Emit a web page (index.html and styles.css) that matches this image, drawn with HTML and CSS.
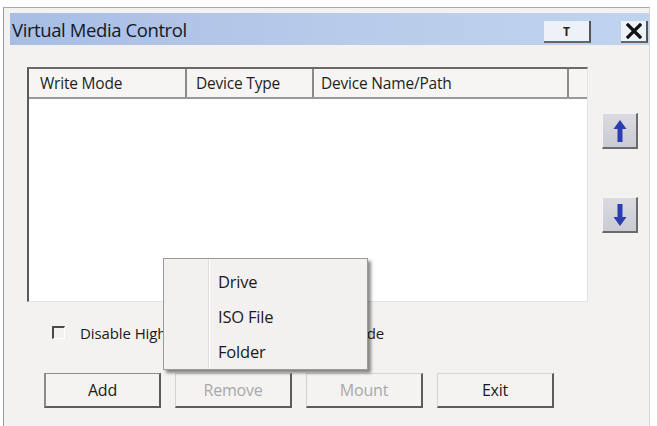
FILE: index.html
```html
<!DOCTYPE html>
<html>
<head>
<meta charset="utf-8">
<link rel="stylesheet" href="styles.css">
</head>
<body>
<div class="window">
  <div class="titlebar">
    <span class="title">Virtual Media Control</span>
    <div class="tbtns">
      <div class="tb tb-t">T</div>
      <div class="tb tb-x">
        <svg width="16" height="16" viewBox="0 0 16 16"><path d="M2 2 L14 14 M14 2 L2 14" stroke="#111" stroke-width="3.2" stroke-linecap="square"/></svg>
      </div>
    </div>
  </div>
  <div class="content">
    <div class="main-row">
      <div class="list">
        <div class="list-head">
          <div class="col c1">Write Mode</div>
          <div class="col c2">Device Type</div>
          <div class="col c3">Device Name/Path</div>
          <div class="col c4"></div>
        </div>
        <div class="list-body"></div>
      </div>
      <div class="side">
        <div class="arrow-btn up">
          <svg width="14" height="24" viewBox="0 0 14 24"><path d="M7 1 L13.5 10 L9.5 10 L9.5 23 L4.5 23 L4.5 10 L0.5 10 Z" fill="#2b3db0"/></svg>
        </div>
        <div class="arrow-btn down">
          <svg width="14" height="24" viewBox="0 0 14 24"><path d="M7 23 L13.5 14 L9.5 14 L9.5 1 L4.5 1 L4.5 14 L0.5 14 Z" fill="#2b3db0"/></svg>
        </div>
      </div>
    </div>
    <div class="check-row">
      <span class="checkbox"></span>
      <span class="check-label">Disable High Speed USB Virtual Media Mode</span>
    </div>
    <div class="btn-row">
      <div class="btn default">Add</div>
      <div class="btn disabled">Remove</div>
      <div class="btn disabled">Mount</div>
      <div class="btn">Exit</div>
    </div>
  </div>
  <div class="menu">
    <div class="menu-item">Drive</div>
    <div class="menu-item">ISO File</div>
    <div class="menu-item">Folder</div>
  </div>
</div>
</body>
</html>
```

FILE: styles.css
```css
html, body {
  margin: 0;
  padding: 0;
  background: #ffffff;
  width: 657px;
  height: 426px;
  overflow: hidden;
  font-family: "Open Sans", "Noto Sans", sans-serif;
  color: #1a1a1a;
}

.window {
  position: relative;
  margin: 7px 0 0 3px;
  width: 647px;
  height: 419px;
  border-left: 1px solid #9a9a9a;
  border-top: 1px solid #aaaaaa;
  border-right: 1px solid #d6d6d6;
  background: #f3f2f0;
  box-sizing: border-box;
  display: flex;
  flex-direction: column;
}

.titlebar {
  margin: 5px 0 0 6px;
  height: 32px;
  background: linear-gradient(to right, #a8bde4, #b9cdeb 60%, #c0d3ee);
  display: flex;
  align-items: center;
  justify-content: space-between;
}

.title {
  font-size: 18.5px;
  letter-spacing: -0.4px;
  color: #151826;
  padding-left: 2px;
  padding-top: 1px;
}

.tbtns {
  display: flex;
  gap: 30px;
  align-self: flex-end;
  margin-bottom: 2px;
  margin-right: 1px;
}

.tb {
  height: 20px;
  background: #edf1f8;
  border-right: 2px solid #555;
  border-bottom: 2px solid #666;
  display: flex;
  align-items: center;
  justify-content: center;
}

.tb-t {
  width: 45px;
  font-size: 12px;
  font-weight: 700;
  color: #222;
}

.tb-x {
  width: 25px;
}

.content {
  padding: 22px 0 0 23px;
  display: flex;
  flex-direction: column;
}

.main-row {
  display: flex;
}

.list {
  width: 561px;
  height: 235px;
  display: flex;
  flex-direction: column;
  background: #ffffff;
  border-top: 2px solid #6a6a6a;
  border-left: 2px solid #5a5a5a;
  border-right: 1px solid #e4e4e4;
  border-bottom: 1px solid #e4e4e4;
  box-sizing: border-box;
}

.list-head {
  display: flex;
  height: 28px;
  background: #f6f5f3;
  border-bottom: 2px solid #9a9a9a;
  font-size: 15.5px;
  letter-spacing: -0.2px;
  color: #1e1e1e;
}

.col {
  display: flex;
  align-items: center;
  border-right: 2px solid #8a8a8a;
  box-sizing: border-box;
  white-space: nowrap;
}

.c1 { width: 158px; padding-left: 11px; }
.c2 { width: 127px; padding-left: 9px; }
.c3 { width: 255px; padding-left: 7px; }
.c4 { flex: 1; border-right: none; }

.list-body {
  flex: 1;
}

.side {
  margin-left: 14px;
  display: flex;
  flex-direction: column;
  padding-top: 46px;
  gap: 48px;
}

.arrow-btn {
  width: 36px;
  height: 36px;
  box-sizing: border-box;
  background: linear-gradient(#dadae0, #cbcbd3);
  border-top: 1px solid #f4f4f4;
  border-left: 1px solid #f4f4f4;
  border-right: 2px solid #6a6a6a;
  border-bottom: 2px solid #6a6a6a;
  display: flex;
  align-items: center;
  justify-content: center;
}

.check-row {
  margin-top: 21px;
  margin-left: 25px;
  height: 19px;
  display: flex;
  align-items: center;
  font-size: 15px;
  color: #1a1a1a;
  white-space: nowrap;
}

.checkbox {
  flex: none;
  width: 13px;
  height: 13px;
  box-sizing: border-box;
  border-top: 2px solid #4a4a4a;
  border-left: 2px solid #4a4a4a;
  border-right: 1px solid #ffffff;
  border-bottom: 1px solid #ffffff;
  background: #f3f2f0;
  margin-right: 15px;
}

.check-label {
  letter-spacing: -0.1px;
}

.btn-row {
  margin-top: 31px;
  margin-left: 17px;
  display: flex;
  gap: 14px;
}

.btn {
  width: 117px;
  height: 35px;
  box-sizing: border-box;
  background: #f4f3f1;
  border-top: 1px solid #d4d4d4;
  border-left: 1px solid #d4d4d4;
  border-right: 2px solid #5c5c5c;
  border-bottom: 2px solid #5c5c5c;
  display: flex;
  align-items: center;
  justify-content: center;
  font-size: 16px;
  letter-spacing: -0.2px;
  color: #1a1a1a;
}

.btn.default {
  border-top: 1px solid #8c8c8c;
  border-left: 2px solid #8c8c8c;
}

.btn.disabled {
  color: #a8a8a8;
}

.menu {
  position: absolute;
  left: 159px;
  top: 250px;
  width: 205px;
  height: 112px;
  box-sizing: border-box;
  background: #f2f1ef;
  border: 1px solid #9a9a9a;
  box-shadow: 3px 3px 3px rgba(0, 0, 0, 0.45);
  padding: 5px 0 0 0;
  background-image: linear-gradient(to right, transparent 44px, #dedcda 44px, #dedcda 45px, #ffffff 45px, #ffffff 46px, transparent 46px);
}

.menu-item {
  height: 35px;
  display: flex;
  align-items: center;
  padding-left: 54px;
  font-size: 16.5px;
  letter-spacing: -0.2px;
  color: #1a1a1a;
}
```
